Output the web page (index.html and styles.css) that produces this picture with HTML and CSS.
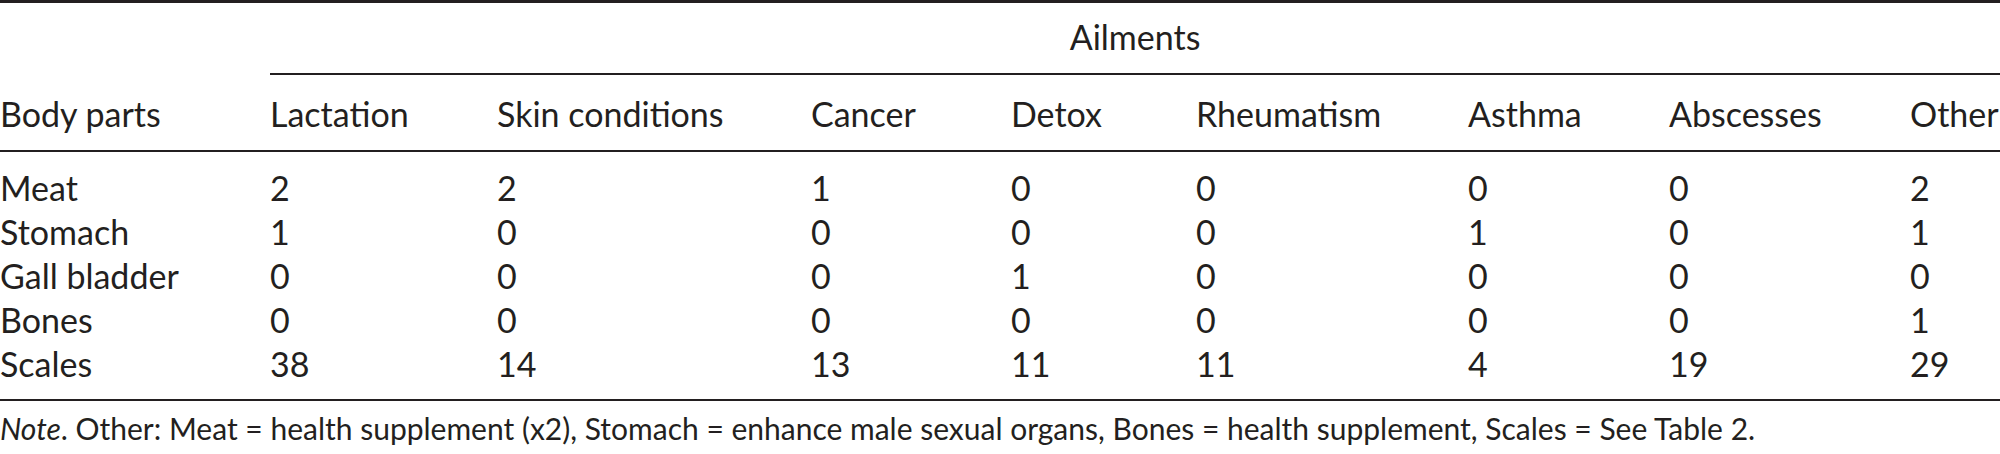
FILE: index.html
```html
<!DOCTYPE html>
<html lang="en">
<head>
<meta charset="utf-8">
<title>Ailments by body part</title>
<link rel="stylesheet" href="styles.css">
</head>
<body>
<div class="page">
<table class="data">
  <colgroup>
    <col class="c-part"><col class="c-lact"><col class="c-skin"><col class="c-canc"><col class="c-detx"><col class="c-rheu"><col class="c-asth"><col class="c-absc"><col class="c-oth">
  </colgroup>
  <thead>
    <tr class="r-group">
      <th class="blank"></th>
      <th class="group" colspan="8">Ailments</th>
    </tr>
    <tr class="r-head">
      <th>Body parts</th>
      <th>Lactation</th>
      <th>Skin conditions</th>
      <th>Cancer</th>
      <th>Detox</th>
      <th>Rheumatism</th>
      <th>Asthma</th>
      <th>Abscesses</th>
      <th>Other</th>
    </tr>
  </thead>
  <tbody>
    <tr class="first"><td>Meat</td><td>2</td><td>2</td><td>1</td><td>0</td><td>0</td><td>0</td><td>0</td><td>2</td></tr>
    <tr><td>Stomach</td><td>1</td><td>0</td><td>0</td><td>0</td><td>0</td><td>1</td><td>0</td><td>1</td></tr>
    <tr><td>Gall bladder</td><td>0</td><td>0</td><td>0</td><td>1</td><td>0</td><td>0</td><td>0</td><td>0</td></tr>
    <tr><td>Bones</td><td>0</td><td>0</td><td>0</td><td>0</td><td>0</td><td>0</td><td>0</td><td>1</td></tr>
    <tr class="last"><td>Scales</td><td>38</td><td>14</td><td>13</td><td>11</td><td>11</td><td>4</td><td>19</td><td>29</td></tr>
  </tbody>
</table>
<p class="note"><em>Note</em>. Other: Meat = health supplement (x2), Stomach = enhance male sexual organs, Bones = health supplement, Scales = See Table 2.</p>
</div>
</body>
</html>
```
FILE: styles.css
```css
html, body {
  margin: 0;
  padding: 0;
  background: #ffffff;
  overflow: hidden;
}

.page {
  width: 2000px;
  font-family: "Lato", "Open Sans", sans-serif;
  color: #231f20;
}

.data {
  width: 2000px;
  table-layout: fixed;
  border-collapse: separate;
  border-spacing: 0;
  border-top: 3px solid #231f20;
  font-size: 34px;
  line-height: 40px;
}

.c-part { width: 270px; }
.c-lact { width: 227px; }
.c-skin { width: 314px; }
.c-canc { width: 200px; }
.c-detx { width: 185px; }
.c-rheu { width: 272px; }
.c-asth { width: 201px; }
.c-absc { width: 241px; }
.c-oth  { width: 90px; }

.data th,
.data td {
  padding: 0;
  text-align: left;
  font-weight: normal;
  white-space: nowrap;
  vertical-align: top;
}

.r-group th {
  padding-top: 14px;
  padding-bottom: 16px;
}

.r-group .group {
  text-align: center;
  border-bottom: 2px solid #231f20;
}

.r-head th {
  padding-top: 19px;
  padding-bottom: 16px;
  border-bottom: 2px solid #231f20;
}

.data tbody td {
  line-height: 44px;
}

.data tr.first td {
  padding-top: 14px;
}

.data tr.last td {
  padding-bottom: 13px;
  border-bottom: 2px solid #231f20;
}

.note {
  margin: 9px 0 0;
  font-size: 30px;
  line-height: 36px;
  white-space: nowrap;
}

.note em {
  font-style: italic;
}
```
